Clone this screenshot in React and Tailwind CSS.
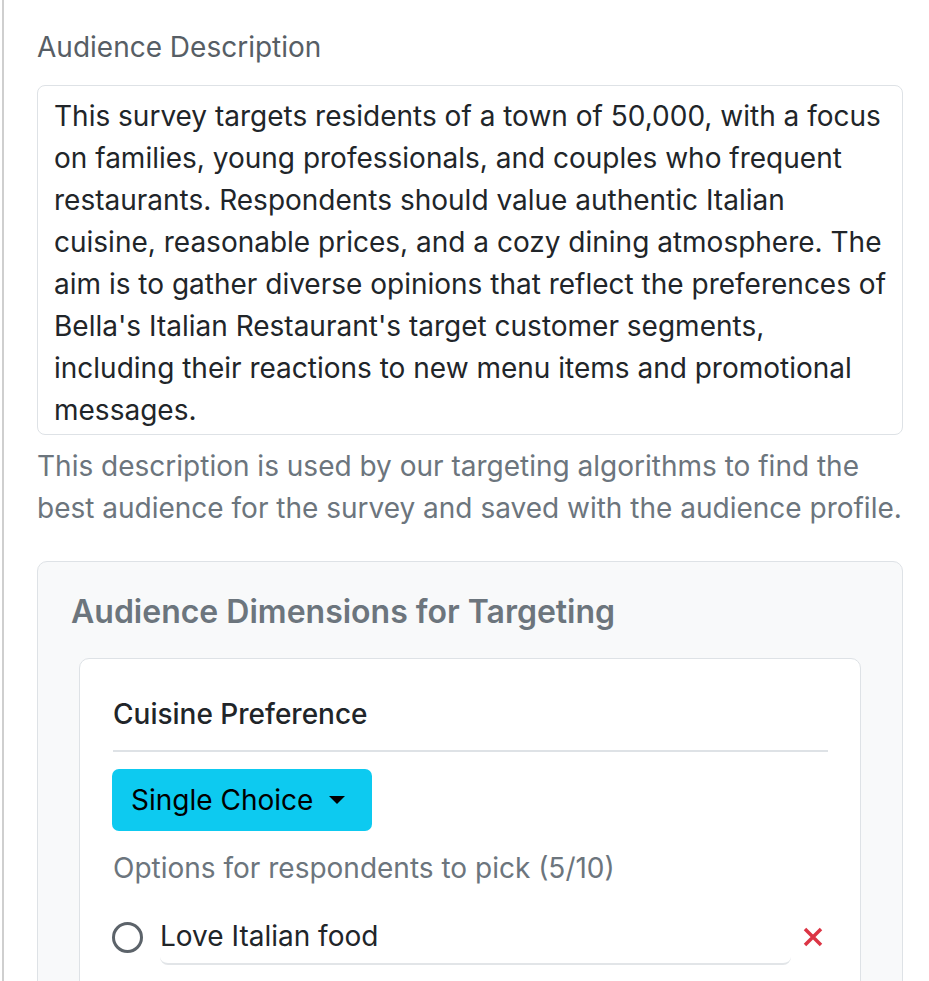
export default function App() {
  const lines = [
    "This survey targets residents of a town of 50,000, with a focus",
    "on families, young professionals, and couples who frequent",
    "restaurants. Respondents should value authentic Italian",
    "cuisine, reasonable prices, and a cozy dining atmosphere. The",
    "aim is to gather diverse opinions that reflect the preferences of",
    "Bella's Italian Restaurant's target customer segments,",
    "including their reactions to new menu items and promotional",
    "messages.",
  ];
  return (
    <div className="w-[929px] h-[981px] overflow-hidden bg-white pl-[2px]" style={{ fontFamily: "Inter, 'Noto Sans', sans-serif" }}>
      <div className="h-full border-l-2 border-[#cfcfcf] pl-[33px] pr-[26px] pt-[26px]">
        <div className="text-[28px] leading-[42px] text-[#575e65]">Audience Description</div>
        <div className="mt-[17px] h-[350px] overflow-hidden rounded-[8px] border border-[#dee2e6] pl-[16px] pr-[10px] pt-[9px] text-[28px] leading-[42px] text-[#212529]">
          {lines.map((l, i) => (
            <div key={i} className="whitespace-nowrap">{l}</div>
          ))}
        </div>
        <div className="mt-[10px] text-[28px] leading-[42px] text-[#6c757d]">
          <div className="whitespace-nowrap">This description is used by our targeting algorithms to find the</div>
          <div className="whitespace-nowrap">best audience for the survey and saved with the audience profile.</div>
        </div>
        <div className="mt-[32px] rounded-[10px] border border-[#dee2e6] bg-[#f8f9fa] px-[41px] pt-[31px] h-[500px]">
          <div className="-ml-[8px] text-[32px] leading-[38px] font-semibold text-[#6c757d]">Audience Dimensions for Targeting</div>
          <div className="mt-[27px] rounded-[10px] border border-[#dee2e6] bg-white pl-[33px] pr-[32px] pt-[34px] h-[400px]">
            <div className="text-[28px] leading-[42px] font-medium text-[#212529]">Cuisine Preference</div>
            <div className="mt-[15px] h-[2px] bg-[#dee2e6]"></div>
            <button className="mt-[17px] -ml-px flex items-center rounded-[7px] bg-[#0dcaf0] pl-[19px] pr-[27px] py-[10px] text-[28px] leading-[42px] text-black">
              Single Choice
              <span className="ml-[16px] inline-block h-0 w-0 border-l-[8px] border-r-[8px] border-t-[8px] border-l-transparent border-r-transparent border-t-black"></span>
            </button>
            <div className="mt-[16px] text-[28px] leading-[42px] text-[#6c757d]">Options for respondents to pick (5/10)</div>
            <div className="mt-[20px] flex items-center">
              <div className="-ml-px h-[31px] w-[31px] shrink-0 rounded-full border-[3px] border-[#5c636a]"></div>
              <div className="ml-[17px] flex h-[56px] w-[631px] items-center rounded-b-[8px] border-b-2 border-[#e2e5e8] text-[28px] leading-[42px] text-[#212529]">
                Love Italian food
              </div>
              <svg className="ml-[11px]" width="22" height="22" viewBox="0 0 22 22">
                <path d="M3 3 L19 19 M19 3 L3 19" stroke="#dc3545" strokeWidth="3.5" strokeLinecap="butt" />
              </svg>
            </div>
          </div>
        </div>
      </div>
    </div>
  );
}
